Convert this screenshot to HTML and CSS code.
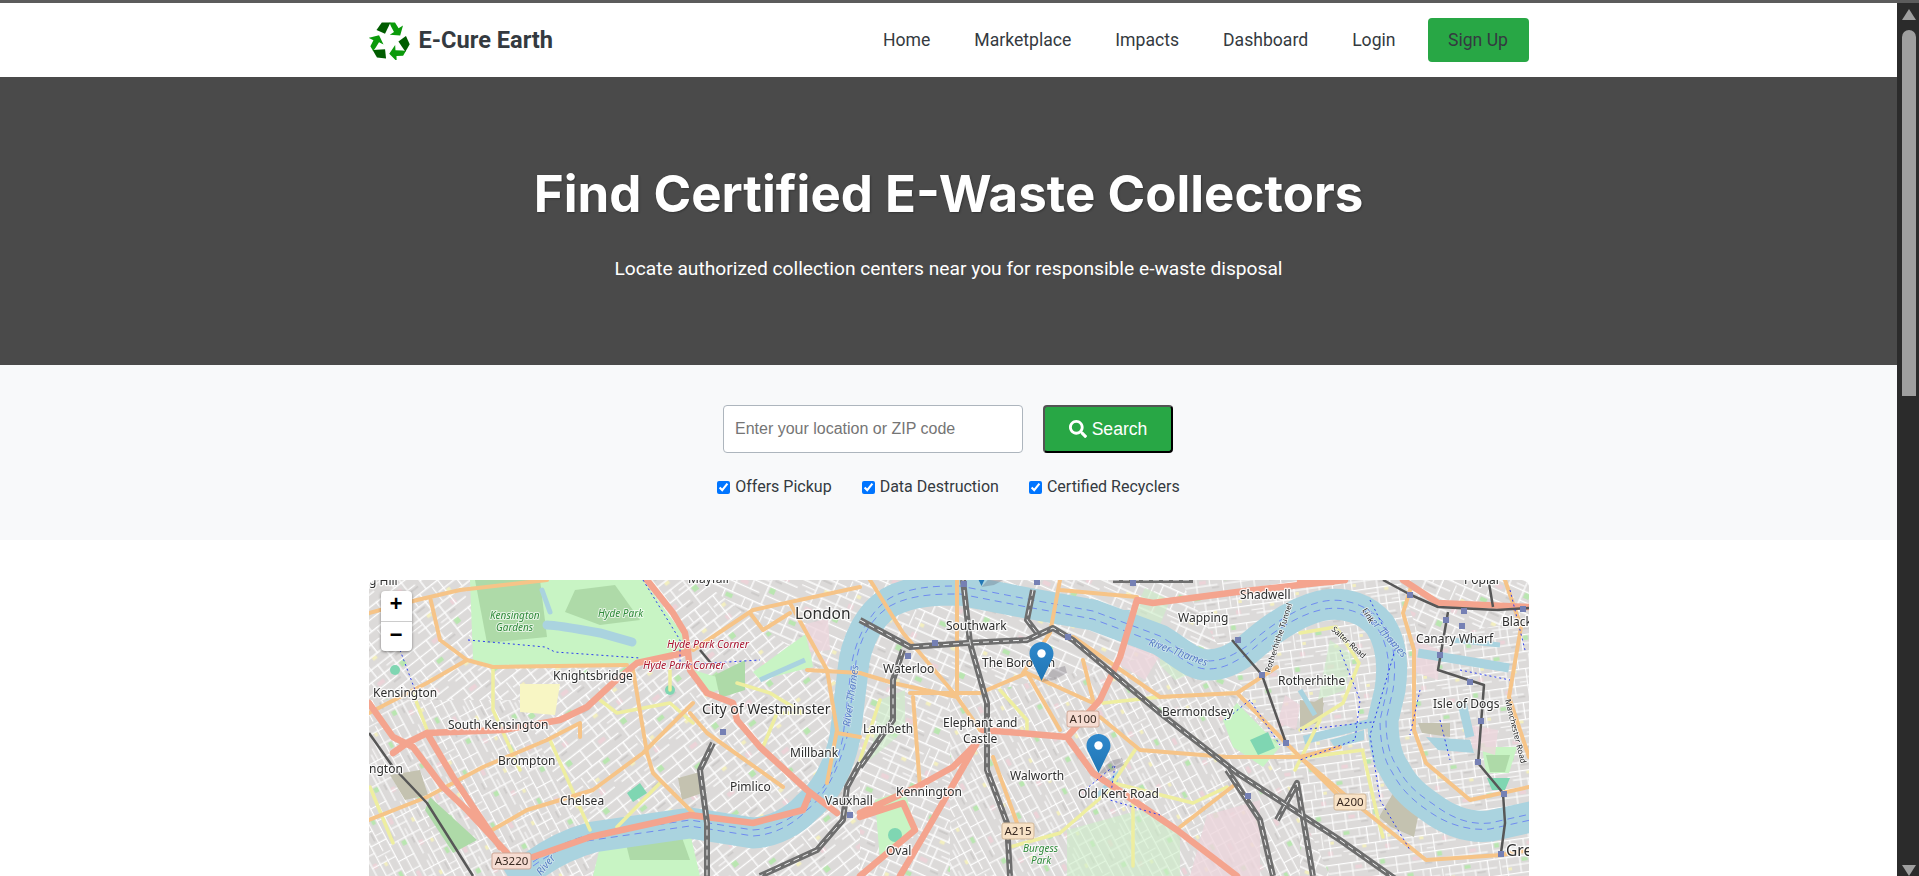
FILE: index.html
```html
<!DOCTYPE html>
<html lang="en">
<head>
<meta charset="utf-8">
<title>E-Cure Earth – Find Certified E-Waste Collectors</title>
<link rel="stylesheet" href="styles.css">
</head>
<body>
<div class="topline"></div>
<div class="frame">
<main class="page">
  <header class="navbar">
    <div class="container nav-inner">
      <a class="brand" href="#">
        <svg class="brand-icon" viewBox="0 0 41 39" aria-hidden="true">
          <defs>
            <g id="rc-arrow">
              <path class="rc-dark" d="M7.5 9 12.8 1.6H21.5L16 12.8Z"/>
              <path class="rc-bright" d="M20.5 1.6H26L29.6 7.2 34 4.4 31.2 14.6 20.8 13.8 25 11 21.8 5Z"/>
            </g>
          </defs>
          <use href="#rc-arrow"/>
          <use href="#rc-arrow" transform="rotate(120 20.5 20.5)"/>
          <use href="#rc-arrow" transform="rotate(240 20.5 20.5)"/>
        </svg>
        <span>E-Cure Earth</span>
      </a>
      <nav class="nav-links">
        <a href="#">Home</a>
        <a href="#">Marketplace</a>
        <a href="#">Impacts</a>
        <a href="#">Dashboard</a>
        <a href="#">Login</a>
        <a class="signup" href="#">Sign Up</a>
      </nav>
    </div>
  </header>

  <section class="hero">
    <h1>Find Certified E-Waste Collectors</h1>
    <p>Locate authorized collection centers near you for responsible e-waste disposal</p>
  </section>

  <section class="search">
    <form class="search-row">
      <input class="search-input" type="text" placeholder="Enter your location or ZIP code">
      <button class="search-btn" type="button">
        <svg viewBox="0 0 512 512" aria-hidden="true"><path d="M505 442.700 405.300 343c-4.500-4.500-10.600-7-17-7H372c27.600-35.300 44-79.700 44-128C416 93.100 322.900 0 208 0S0 93.100 0 208s93.100 208 208 208c48.300 0 92.700-16.400 128-44v16.300c0 6.400 2.500 12.500 7 17l99.700 99.700c9.400 9.400 24.600 9.400 33.900 0l28.300-28.300c9.400-9.400 9.400-24.600.1-34zM208 336c-70.700 0-128-57.200-128-128 0-70.700 57.200-128 128-128 70.700 0 128 57.200 128 128 0 70.700-57.200 128-128 128z"/></svg>
        Search
      </button>
    </form>
    <div class="filters">
      <label><input type="checkbox" checked> Offers Pickup</label>
      <label><input type="checkbox" checked> Data Destruction</label>
      <label><input type="checkbox" checked> Certified Recyclers</label>
    </div>
  </section>

  <section class="container map-wrap">
    <div class="map">
      <svg class="tiles" viewBox="369 580 1160 296" aria-label="Street map of London">
        <defs>
          <pattern id="st" width="96" height="84" patternUnits="userSpaceOnUse" patternTransform="rotate(24) scale(.72)">
            <rect width="96" height="84" fill="#dcdad9"/>
            <g fill="#b9e6b0"><rect x="8" y="4" width="10" height="6"/><rect x="62" y="58" width="8" height="8"/></g>
            <g fill="#f3efc0"><rect x="36" y="30" width="7" height="5"/><rect x="80" y="18" width="6" height="5"/></g>
            <g fill="#ecd3d8"><rect x="20" y="62" width="11" height="6"/><rect x="74" y="34" width="8" height="7"/></g>
            <g fill="#fff">
              <rect y="0" width="96" height="2"/><rect y="14" width="62" height="1.800"/><rect x="70" y="14" width="26" height="1.800"/>
              <rect y="28" width="96" height="2"/><rect x="12" y="42" width="84" height="1.800"/><rect y="56" width="96" height="2"/>
              <rect y="70" width="50" height="1.800"/><rect x="58" y="70" width="38" height="1.800"/>
              <rect x="4" width="1.800" height="28"/><rect x="24" y="14" width="1.800" height="42"/><rect x="46" width="2" height="30"/>
              <rect x="58" y="28" width="1.800" height="56"/><rect x="78" width="1.800" height="44"/><rect x="14" y="56" width="1.800" height="28"/>
              <rect x="36" y="42" width="1.800" height="30"/><rect x="88" y="56" width="1.800" height="28"/>
              <rect x="66" y="4" width="1.500" height="24"/><rect x="34" y="2" width="1.500" height="12"/><rect x="4" y="36" width="20" height="1.500"/><rect x="46" y="50" width="12" height="1.500"/>
            </g>
            <g fill="#cbc9c8"><rect x="28" y="18" width="14" height="2.500"/><rect x="64" y="46" width="10" height="2.500"/><rect x="40" y="74" width="12" height="2.500"/></g>
          </pattern>
          <pattern id="st2" href="#st" patternTransform="rotate(-38) scale(.72)"/>
          <pattern id="st3" href="#st" patternTransform="rotate(62) scale(.62)"/>
          <pattern id="st4" href="#st" patternTransform="rotate(-8) scale(.6)"/>
          <path id="r1" d="M860 620 910 647 967 643 1027 640 1053 628 1073 640 1160 713 1237 773 1340 840 1411 890"/>
          <path id="r2" d="M963 580 970 643 987 703V770L1007 823 1010 876"/>
          <path id="r3" d="M1033 590 1027 620 1037 633M903 650 893 680V720L860 767"/>
          <path id="r4" d="M860 763 847 787 843 820 817 850 760 876M713 743 700 770 707 823V876M1227 770 1260 820 1273 876M1277 820 1297 783 1313 876M1113 580H1193"/>
        </defs>

        <!-- land -->
        <rect x="369" y="580" width="1160" height="296" fill="url(#st)"/>
        <path fill="url(#st2)" d="M369 580H700L860 700V876H520L369 800Z"/>
        <path fill="url(#st3)" d="M950 700 1180 650 1300 760 1300 876H950Z"/>
        <path fill="url(#st4)" d="M1180 580H1400L1420 640 1529 620V876H1330L1250 700Z"/>
        <path fill="url(#st3)" d="M369 700 520 700 600 876H369Z"/>

        <!-- land use -->
        <g class="park">
          <path d="M470 580H643L680 630 688 650 627 664 493 665 473 660Z"/>
          <path d="M753 672 807 633 813 667 760 680Z"/>
          <path d="M693 670 737 683 710 693Z"/>
          <path d="M600 847 690 833 700 876H593Z"/>
          <path d="M1067 830 1140 810 1180 830V876H1067Z" class="soft"/>
          <path d="M1223 720 1237 703 1280 747 1263 767 1233 747Z"/>
          <path d="M1482 747H1517L1509 773H1486Z"/>
          <path d="M1145 588 1170 600 1160 625 1130 620Z" class="soft"/>
          <path d="M1160 640 1190 655 1205 668 1175 680 1160 665Z" class="soft"/>
          <path d="M1330 640 1352 655 1345 690 1318 700Z" class="soft"/>
          <path d="M880 700 905 690 905 730 870 760Z" class="soft"/>
          <path d="M875 800 905 790 915 830 880 860Z"/>
        </g>
        <g class="forest">
          <path d="M475 580H540L547 637 487 643Z"/>
          <path d="M575 590 615 585 640 620 600 625 565 612Z"/>
          <path d="M430 797 477 840 453 853 425 810Z"/>
          <path d="M625 840 680 832 690 860 630 860Z"/>
          <path d="M715 675 745 660 745 690 720 698Z"/>
          <path d="M1486 755H1510L1505 772H1490Z"/>
        </g>
        <g class="sand">
          <path d="M1300 700 1324 703 1320 723 1300 727Z"/>
          <path d="M1379 817 1395 790 1418 817 1414 837 1391 827Z"/>
          <path d="M1418 723H1450V737L1422 733Z"/>
          <path d="M1300 710 1323 697 1323 717 1303 727Z"/>
          <path d="M678 778 700 772 705 792 682 800Z"/>
          <path d="M390 775 420 770 428 795 405 800Z"/>
        </g>
        <g class="pink">
          <path d="M1207 815 1260 800 1260 876H1190Z"/>
          <path d="M1285 695 1300 705 1296 730 1278 722Z"/>
          <path d="M1415 640 1440 650 1438 680 1415 672Z"/>
          <path d="M1470 725 1498 730 1495 755 1472 748Z"/>
          <path d="M803 625 828 618 830 650 810 652Z"/>
          <path d="M1125 640 1160 655 1145 680 1120 665Z"/>
        </g>
        <path class="yellowzone" d="M520 684H560L555 715 520 712Z"/>
        <g class="pitch">
          <path d="M627 793 640 783 647 793 633 802Z"/>
          <path d="M1250 740 1268 732 1275 748 1258 755Z"/>
          <path d="M1487 778 1510 778 1505 790 1492 790Z"/>
          <circle cx="395" cy="670" r="5"/><circle cx="670" cy="690" r="5"/><circle cx="895" cy="835" r="7"/>
        </g>

        <!-- water -->
        <g class="water">
          <path class="river" d="M510 880 533 866C555 850 575 842 593 837L690 823 753 833C775 832 795 820 807 807 826 792 838 770 845 737L853 670C855 645 868 615 890 602 912 590 938 590 960 590L1027 603 1093 615 1160 640C1180 652 1192 665 1207 665 1222 665 1232 660 1247 650 1267 632 1295 612 1320 606 1345 600 1368 610 1380 625 1393 645 1393 670 1390 690L1383 720C1383 745 1388 760 1395 770 1405 790 1420 800 1430 807 1450 822 1470 828 1490 826L1535 816"/>
          <path d="M547 625C555 625 567 627 600 633L632 642" class="lake"/>
          <path d="M542 590 550 612" class="lake thin"/>
          <path d="M1418 653 1509 668" class="dock"/>
          <path d="M1304 740 1371 723" class="dock"/>
          <path d="M1462 703 1470 737" class="dock"/>
          <path d="M1426 737 1470 740 1474 753 1438 750Z"/>
          <path d="M1452 640 1500 645" class="dock thin"/>
          <path d="M1108 610 1130 610 1125 625Z"/>
          <path d="M1095 795 1118 770 1118 785 1095 800Z"/>
          <path d="M1330 740 1364 730 1364 740 1335 748Z"/>
          <path d="M760 680 805 660" class="dock thin"/>
          <path d="M1300 690 1315 715" class="dock thin"/>
        </g>
        <g class="river-line">
          <path d="M533 866C555 850 575 842 593 840L690 826 753 836C775 835 795 823 807 810 826 795 838 770 847 737L855 670C857 645 868 620 890 606 912 594 938 594 960 594L1027 607 1093 619 1160 644C1180 656 1192 669 1207 669 1222 669 1232 664 1247 654 1267 636 1295 616 1320 610 1345 604 1368 614 1378 629 1390 649 1390 670 1387 690L1380 720C1380 745 1385 762 1392 772 1402 792 1417 803 1427 810 1447 825 1470 831 1490 829L1535 819"/>
          <path d="M533 862C555 846 575 838 593 834L690 820 753 830C775 829 795 817 807 804 826 789 836 770 843 737L851 670C853 645 868 612 890 598 912 586 938 586 960 586L1027 599 1093 611 1160 636C1180 648 1192 661 1207 661 1222 661 1232 656 1247 646 1267 628 1295 608 1320 602 1345 596 1368 606 1382 621 1396 641 1396 670 1393 690L1386 720C1386 745 1391 758 1398 768 1408 788 1423 797 1433 804 1453 819 1470 825 1490 823L1535 813"/>
        </g>

        <!-- secondary (yellow) -->
        <g class="rd-yellow">
          <path d="M600 700 617 713 670 703 693 723M670 670V690M737 683 770 693 803 713 777 713 763 747"/>
          <path d="M493 670V710L520 770M550 740 590 830M413 693 427 730M370 787 393 843M617 827 660 783"/>
          <path d="M1000 690 1027 720V733M1103 703 1160 697M1137 747 1113 783 1193 803 1227 787M1113 787 1060 833 1010 847M1133 790V866"/>
          <path d="M1300 633 1336 627 1359 663 1343 703 1300 730M1363 753 1379 823 1383 837M1308 757 1363 750M1160 697 1237 693"/>
          <path d="M1295 770 1320 720M860 760 880 700"/>
        </g>

        <!-- tertiary (orange) -->
        <g class="rd-orange">
          <path d="M369 613 417 600 460 590 547 580M369 713 427 683 467 660 493 667 627 665M430 597 440 640 467 660"/>
          <path d="M633 670 647 753 653 773 693 813M860 587 753 610 693 650M750 613 763 630 790 613M790 603 827 670 837 730 827 783"/>
          <path d="M547 740 580 723 580 737M369 820 427 797 483 767 547 740M693 703 643 753 593 790 527 810 487 833M690 713 707 733 783 787M807 670 860 673M837 733 860 737"/>
          <path d="M870 580 903 633 957 697 980 730M957 580V697M860 673 893 683 957 697M913 697 920 787M910 693H980L1027 673 1060 730M1027 673 1093 703M1083 660 1093 700"/>
          <path d="M1060 580 1050 633 1023 673M1060 590 1137 597M1073 637 1160 697 1237 693 1283 740 1340 797M1237 693 1277 667M1100 717 1140 750 1227 757H1300L1340 747M1180 827 1237 783M993 757 1017 823"/>
          <path d="M1411 587 1403 613 1414 650V730L1426 763 1470 800 1529 787M1505 580 1521 627 1509 697 1529 757M1300 757 1351 800 1426 860 1501 855 1529 850"/>
        </g>

        <!-- primary (salmon) -->
        <g class="rd-salmon">
          <path d="M647 580 673 613 685 633 688 652 690 670 707 693 733 703 737 720 760 747 807 790 837 813"/>
          <path d="M688 652 637 663 613 683 587 707 560 720 503 730 427 733 407 743 393 753"/>
          <path d="M369 703 393 737 413 747 443 787 467 810 507 853M427 733 453 777 500 847"/>
          <path d="M533 857 590 837 690 815 753 823 803 810 810 793"/>
          <path d="M983 730 1067 737 1093 773 1177 830 1237 876M1067 737 1100 700 1120 657 1137 600 1153 603 1237 592 1345 580"/>
          <path d="M977 743 953 767 917 787 860 813M977 743 927 830 900 876M860 817 903 803 915 830 885 855 860 876"/>
          <path d="M1403 580 1438 603 1529 607M1300 582H1332"/>
        </g>

        <!-- railways -->
        <g class="rail">
          <use href="#r1"/><use href="#r2"/><use href="#r3"/><use href="#r4"/>
        </g>
        <g class="rail-inner">
          <use href="#r1"/><use href="#r2"/><use href="#r3"/><use href="#r4"/>
        </g>
        <g class="rail-thin">
          <path d="M369 733 393 767 427 803 473 876M1383 580 1411 595 1438 607 1497 610 1529 608M1489 583 1493 607"/>
          <path d="M1448 612 1438 670 1484 685 1478 763 1503 793 1505 823 1501 853M1232 640 1262 675 1286 743M700 650 715 668"/>
        </g>

        <!-- boundaries -->
        <g class="boundary">
          <path d="M468 640 545 647 555 652 640 658M643 580 680 640 680 665 760 660M400 650 415 690"/>
          <path d="M1420 690 1410 735M1340 650 1360 700 1355 740 1300 760M1225 720 1250 700 1280 745M1085 790 1115 765 1110 800 1160 815"/>
          <path d="M1370 600 1395 650 1370 735 1380 800 1410 850M1460 670 1510 680M1300 730 1372 722M1440 720 1450 760M1510 590 1525 650"/>
        </g>

        <!-- stations -->
        <g class="station">
          <rect x="1407" y="592" width="6" height="6"/><rect x="1461" y="608" width="6" height="6"/><rect x="1520" y="606" width="6" height="6"/>
          <rect x="1443" y="617" width="6" height="6"/><rect x="1459" y="623" width="6" height="6"/><rect x="1437" y="652" width="6" height="6"/>
          <rect x="1467" y="679" width="6" height="6"/><rect x="1478" y="718" width="6" height="6"/><rect x="1475" y="759" width="6" height="6"/>
          <rect x="1501" y="791" width="6" height="6"/><rect x="1498" y="851" width="6" height="6"/><rect x="961" y="581" width="6" height="6"/>
          <rect x="1034" y="579" width="6" height="6"/><rect x="1130" y="580" width="6" height="6"/><rect x="932" y="640" width="6" height="6"/>
          <rect x="905" y="653" width="6" height="6"/><rect x="1065" y="634" width="6" height="6"/><rect x="1235" y="637" width="6" height="6"/>
          <rect x="1259" y="672" width="6" height="6"/><rect x="1283" y="740" width="6" height="6"/><rect x="1245" y="793" width="6" height="6"/>
          <rect x="720" y="729" width="6" height="6"/><rect x="847" y="812" width="6" height="6"/>
        </g>

        <!-- road shields -->
        <g class="shield">
          <rect x="492" y="853" width="39" height="16" rx="2"/><rect x="1067" y="711" width="32" height="16" rx="2"/>
          <rect x="1002" y="823" width="32" height="16" rx="2" class="tan"/><rect x="1334" y="794" width="32" height="16" rx="2" class="tan"/>
        </g>
        <g class="shield-text">
          <text x="511.500" y="865">A3220</text><text x="1083" y="723">A100</text>
          <text x="1018" y="835">A215</text><text x="1350" y="806">A200</text>
        </g>

        <!-- place labels -->
        <g class="lbl">
          <text x="369" y="585">g Hill</text><text x="688" y="583">Mayfair</text>
          <text class="big" x="795" y="619">London</text>
          <text x="373" y="697">Kensington</text><text x="553" y="680">Knightsbridge</text>
          <text x="448" y="729">South Kensington</text><text x="498" y="765">Brompton</text>
          <text x="369" y="773">ngton</text><text x="560" y="805">Chelsea</text>
          <text class="mid" x="702" y="714">City of Westminster</text>
          <text x="790" y="757">Millbank</text><text x="730" y="791">Pimlico</text><text x="825" y="805">Vauxhall</text>
          <text x="946" y="630">Southwark</text><text x="982" y="667">The Borough</text>
          <text x="883" y="673">Waterloo</text><text x="863" y="733">Lambeth</text>
          <text x="943" y="727">Elephant and</text><text x="963" y="743">Castle</text>
          <text x="1010" y="780">Walworth</text><text x="896" y="796">Kennington</text><text x="886" y="855">Oval</text>
          <text x="1078" y="798">Old Kent Road</text><text x="1162" y="716">Bermondsey</text>
          <text x="1178" y="622">Wapping</text><text x="1240" y="599">Shadwell</text><text x="1278" y="685">Rotherhithe</text>
          <text x="1416" y="643">Canary Wharf</text><text x="1433" y="708">Isle of Dogs</text>
          <text x="1464" y="584">Poplar</text><text x="1502" y="626">Black</text><text class="big" x="1506" y="856">Gre</text>
        </g>
        <g class="lbl-park">
          <text x="490" y="619">Kensington</text><text x="496" y="631">Gardens</text><text x="598" y="617">Hyde Park</text>
          <text x="1023" y="852">Burgess</text><text x="1031" y="864">Park</text>
        </g>
        <g class="lbl-red">
          <text x="667" y="648">Hyde Park Corner</text><text x="643" y="669">Hyde Park Corner</text>
        </g>
        <g class="lbl-water">
          <text transform="translate(1148 645) rotate(20)">River Thames</text>
          <text transform="translate(1361 612) rotate(48)">River Thames</text>
          <text transform="translate(850 727) rotate(-82)">River Thames</text>
          <text transform="translate(541 876) rotate(-50)">River</text>
        </g>
        <g class="lbl-road">
          <text transform="translate(1270 673) rotate(-72)">Rotherhithe Tunnel</text>
          <text transform="translate(1505 700) rotate(76)">Manchester Road</text>
          <text transform="translate(1331 630) rotate(42)">Salter Road</text>
          <text transform="translate(1362 610) rotate(60)">Link</text>
        </g>
      </svg>

      <div class="zoom-ctl">
        <a href="#">+</a>
        <a href="#">&#x2212;</a>
      </div>

      <svg class="pin pin-a" viewBox="0 0 41 41" aria-hidden="true"><use href="#pin-shape"/></svg>
      <svg class="pin pin-b" viewBox="0 0 41 41" aria-hidden="true"><use href="#pin-shape"/></svg>
      <svg class="pin pin-c" viewBox="0 0 41 41" aria-hidden="true"><use href="#pin-shape"/></svg>
      <svg class="hidden-defs" aria-hidden="true">
        <defs>
          <linearGradient id="pin-grad" x1="0" y1="0" x2="0" y2="1">
            <stop offset="0" stop-color="#2e88cc"/><stop offset="1" stop-color="#2176b4"/>
          </linearGradient>
          <g id="pin-shape">
            <path class="pin-shadow" d="M12.500 41 24 28 36 25 38 32 25 39Z"/>
            <path fill="url(#pin-grad)" d="M12.500 1C6 1 .5 6.200.5 12.500c0 3 1.200 5.500 2.400 7.600L12.500 40l9.600-19.900c1.200-2.100 2.400-4.600 2.400-7.600C24.500 6.200 19 1 12.500 1Z"/>
            <circle cx="12.500" cy="12.500" r="4.200" fill="#fff"/>
          </g>
        </defs>
      </svg>
    </div>
  </section>
</main>

<aside class="scrollbar" aria-hidden="true">
  <span class="arrow-up"></span>
  <span class="thumb"></span>
  <span class="arrow-down"></span>
</aside>
</div>
</body>
</html>
```

FILE: styles.css
```css
* { box-sizing: border-box; }
html, body { height: 100%; }
body {
  margin: 0;
  overflow: hidden;
  display: flex;
  flex-direction: column;
  background: #fff;
  color: #343a40;
  font-family: Roboto, "Liberation Sans", sans-serif;
}
a { text-decoration: none; color: inherit; }

.topline { flex: 0 0 3px; background: #5c5c5c; }
.frame { flex: 1; min-height: 0; display: flex; }
.page { flex: 1; min-width: 0; overflow: hidden; }

.container { width: 1160px; margin: 0 auto; }

/* nav */
.navbar { height: 74px; background: #fff; }
.nav-inner { height: 100%; display: flex; align-items: center; justify-content: space-between; }
.brand { display: flex; align-items: center; gap: 9px; font-size: 23.600px; font-weight: 700; color: #343a40; }
.brand-icon { width: 41px; height: 39px; display: block; }
.rc-dark { fill: #005c00; }
.rc-bright { fill: #0b9a0b; }
.nav-links { display: flex; align-items: center; gap: 44px; font-size: 17.600px; font-weight: 400; }
.signup {
  margin-left: -12px;
  height: 44px;
  padding: 0 20.500px;
  display: flex;
  align-items: center;
  background: #28a745;
  border-radius: 4px;
}

/* hero */
.hero {
  height: 288px;
  background: #4a4a4a;
  color: #fff;
  text-align: center;
  padding-top: 82px;
}
.hero h1 {
  margin: 0;
  font-family: Inter, "Open Sans", sans-serif;
  font-size: 51px;
  line-height: 70px;
  font-weight: 700;
  text-shadow: 1px 1px 2px rgba(0,0,0,.3);
}
.hero p { margin: 26px 0 0; font-size: 19.200px; line-height: 28px; font-weight: 400; }

/* search */
.search { height: 175px; padding-top: 40px; background: #f8f9fa; }
.search-row { display: flex; justify-content: center; gap: 20px; padding-right: 1px; }
.search-input {
  width: 300px;
  height: 48px;
  padding: 0 11px;
  border: 1px solid #adb5bd;
  border-radius: 4px;
  background: #fff;
  font: 16px "Liberation Sans", Arial, sans-serif;
}
.search-input::placeholder { color: #757575; }
.search-btn {
  width: 130px;
  height: 48px;
  padding: 0;
  display: flex;
  align-items: center;
  justify-content: center;
  gap: 5px;
  border: 2px outset #000;
  border-radius: 4px;
  background: #28a745;
  color: #fff;
  font: 17.600px "Liberation Sans", Arial, sans-serif;
}
.search-btn svg { width: 18px; height: 18px; fill: #fff; }
.filters { margin-top: 24px; display: flex; justify-content: center; gap: 30px; font-size: 16px; line-height: 20px; }
.filters label { display: flex; align-items: center; gap: 5px; }
.filters input { margin: 0; width: 13px; height: 13px; accent-color: #0075ff; }

/* map */
.map-wrap { padding-top: 40px; }
.map { position: relative; width: 1160px; height: 296px; overflow: hidden; border-radius: 8px 8px 0 0; background: #dedcdb; }
.tiles { display: block; width: 1160px; height: 296px; filter: blur(.35px); }

.park path { fill: #c8f4c4; }
.park .soft { fill: #cdeec8; opacity: .6; }
.forest path { fill: #aedaa8; }
.sand path { fill: #c4c2b0; }
.pink path { fill: #ecd6dc; opacity: .8; }
.yellowzone { fill: #f8f6c4; }
.pitch path, .pitch circle { fill: #7fd6b2; }
.water path { fill: #aad3df; }
.water .river { fill: none; stroke: #aad3df; stroke-width: 31; stroke-linejoin: round; }
.water .lake { fill: none; stroke: #aad3df; stroke-width: 9; stroke-linecap: round; }
.water .lake.thin { stroke-width: 5; }
.water .dock { fill: none; stroke: #aad3df; stroke-width: 9; }
.water .dock.thin { stroke-width: 5; }
.river-line path { fill: none; stroke: #6f8bf0; stroke-width: 1; stroke-dasharray: 7 5; }

.rd-yellow path, .rd-orange path, .rd-salmon path { fill: none; stroke-linejoin: round; stroke-linecap: round; }
.rd-yellow path { stroke: #eeeea0; stroke-width: 3.500; }
.rd-orange path { stroke: #f6c488; stroke-width: 4; }
.rd-salmon path { stroke: #f4a48e; stroke-width: 6.500; }

.rail use { fill: none; stroke: #6e6e6e; stroke-width: 6; stroke-linejoin: round; }
.rail-inner use { fill: none; stroke: #f2f2f2; stroke-width: 1; stroke-dasharray: 6 4; stroke-linejoin: round; }
.rail-thin path { fill: none; stroke: #575757; stroke-width: 2.500; stroke-linejoin: round; }
.boundary path { fill: none; stroke: #2a3cf0; stroke-width: 1; stroke-dasharray: 2 3; }
.station rect { fill: #7580b4; }

.shield rect { fill: #f6dcd2; stroke: #cfa796; stroke-width: 1; }
.shield rect.tan { fill: #f8e2c6; stroke: #d2b898; }
.shield-text text { font: 11.500px "Noto Sans", sans-serif; fill: #3a2a22; text-anchor: middle; }

.lbl text, .lbl-park text, .lbl-red text, .lbl-water text, .lbl-road text {
  font-family: "Noto Sans", sans-serif;
  paint-order: stroke;
  stroke-linejoin: round;
}
.lbl text { font-size: 12px; fill: #2e2e2e; stroke: rgba(255,255,255,.85); stroke-width: 2.500px; }
.lbl text.mid { font-size: 14px; }
.lbl text.big { font-size: 15.500px; }
.lbl-park text { font-size: 10px; font-style: italic; fill: #2f8a3a; stroke: rgba(255,255,255,.7); stroke-width: 2px; }
.lbl-red text { font-size: 10.500px; font-style: italic; fill: #a8142f; stroke: rgba(255,255,255,.75); stroke-width: 2px; }
.lbl-water text { font-size: 10.500px; font-style: italic; fill: #5a7fc4; stroke: rgba(255,255,255,.4); stroke-width: 1.500px; }
.lbl-road text { font-size: 8px; fill: #222; stroke: rgba(255,255,255,.8); stroke-width: 1.500px; }

.zoom-ctl {
  position: absolute;
  left: 12px;
  top: 11px;
  width: 31px;
  background: #fff;
  border-radius: 4px;
  box-shadow: 0 1px 3px rgba(0,0,0,.45);
  overflow: hidden;
}
.zoom-ctl a {
  display: block;
  height: 30px;
  text-align: center;
  font: 700 22px/30px "Liberation Mono", monospace;
  color: #000;
}
.zoom-ctl a + a { border-top: 1px solid #ccc; }

.pin { position: absolute; width: 41px; height: 41px; overflow: visible; }
.pin-a { left: 660.500px; top: 61px; }
.pin-b { left: 717.500px; top: 153px; }
.pin-c { left: 600.500px; top: -34px; }
.pin-shadow { fill: rgba(60,50,70,.22); }
.hidden-defs { position: absolute; width: 0; height: 0; }

/* custom scrollbar */
.scrollbar { position: relative; flex: 0 0 22px; background: #2b2b2b; }
.thumb { position: absolute; left: 5px; top: 27px; width: 14px; height: 366px; border-radius: 7px 7px 0 0; background: #9f9f9f; }
.arrow-up, .arrow-down { position: absolute; left: 5px; width: 0; height: 0; border-left: 7px solid transparent; border-right: 7px solid transparent; }
.arrow-up { top: 6px; border-bottom: 11px solid #9f9f9f; }
.arrow-down { bottom: 0; border-top: 11px solid #9f9f9f; }
```
